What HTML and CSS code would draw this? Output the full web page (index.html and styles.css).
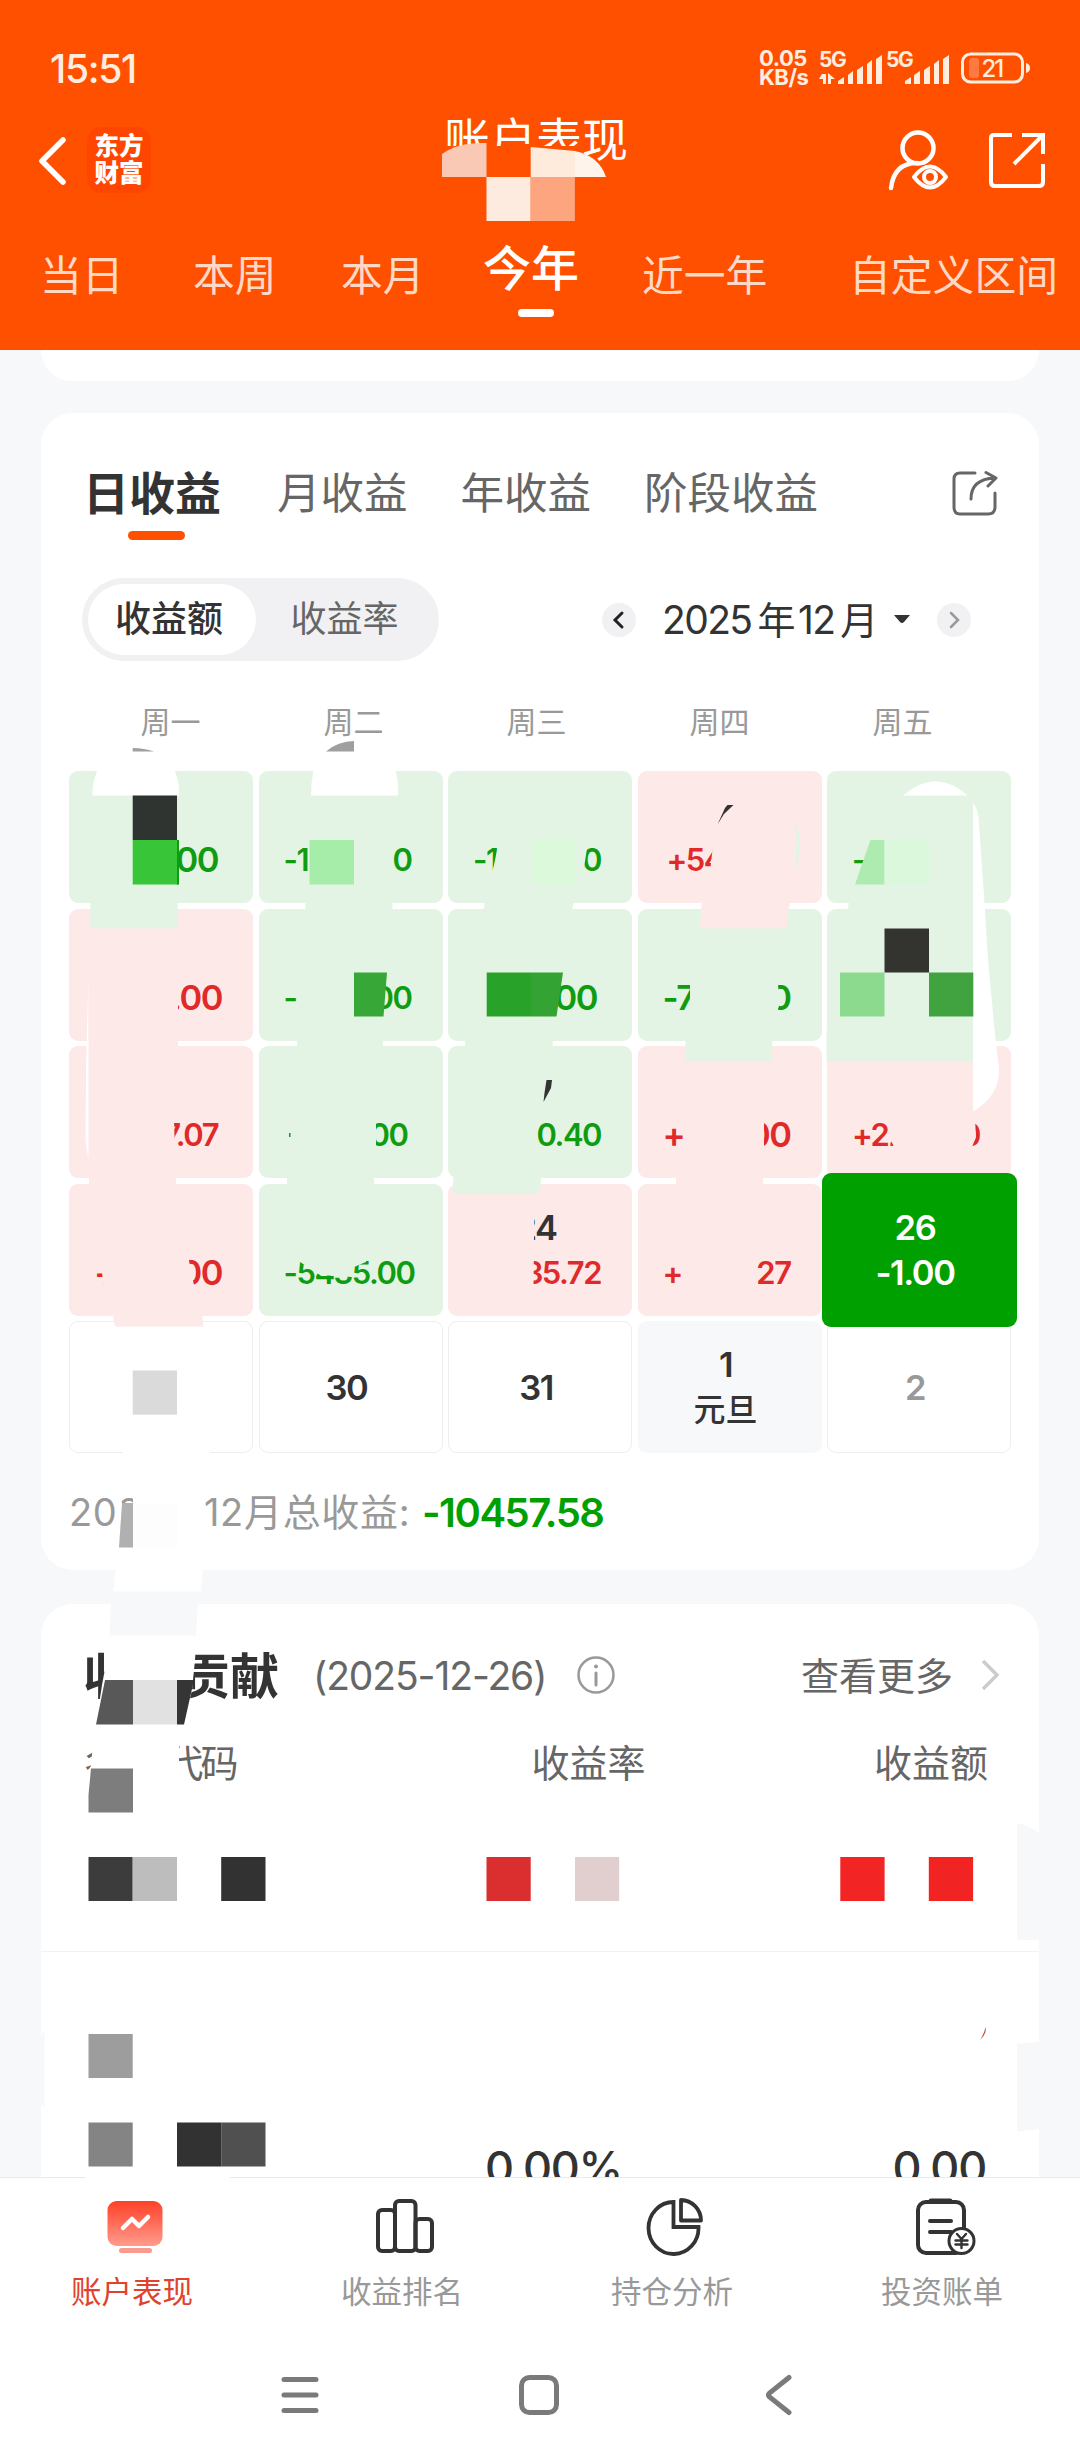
FILE: index.html
```html
<!DOCTYPE html>
<html lang="zh-CN">
<head>
  <meta charset="UTF-8">
  <meta name="viewport" content="width=device-width, initial-scale=1.0">
  <title>账户表现</title>
  <link rel="stylesheet" href="styles.css">
</head>
<body>
<div class="page">
  <header class="header">
    <div class="status">
      <span class="time">15:51</span>
      <div class="speed"><span>0.05</span><span>KB/s</span></div>
      <svg class="signals" width="132" height="40" viewBox="0 0 132 40">
        <g fill="#ffede0">
          <text class="net" x="0" y="19">5G</text>
          <text class="net" x="67" y="19">5G</text>
          <path d="M3 26h4v10h-3v-5h-4zM9 25l7 6h-4v5h-3z"/>
          <path d="M19 36v-3l6-4v7zM29 36v-9l5-4v13zM38 36V22l6-4v18zM48 36V16l5-4v24zM57 36V11l6-4v29z"/>
          <path d="M86 36v-3l6-4v7zM95 36v-9l6-4v13zM105 36V22l6-4v18zM115 36V16l5-4v24zM124 36V11l6-4v29z"/>
        </g>
      </svg>
      <svg class="battery" width="72" height="32" viewBox="0 0 72 32">
        <rect x="2.500" y="2" width="60" height="28" rx="8" fill="none" stroke="#ffede0" stroke-width="3"/>
        <rect x="9" y="6" width="10" height="20" rx="3" fill="#ff7a42"/>
        <path d="M66 11q4 1 4 5t-4 5z" fill="#ffede0"/>
        <text class="level" x="21.500" y="24.500">21</text>
      </svg>
    </div>

    <div class="titlebar">
      <svg class="back" width="30" height="50" viewBox="0 0 30 50"><path d="M26 4L5 25l21 21" fill="none" stroke="#fff" stroke-width="5.500" stroke-linecap="round" stroke-linejoin="round"/></svg>
      <div class="logo">东方<br>财富</div>
      <h1>账户表现</h1>
      <svg class="user" width="62" height="64" viewBox="0 0 62 64" fill="none" stroke="#fff" stroke-width="4.500" stroke-linecap="round">
        <circle cx="30" cy="21" r="15.500"/>
        <path d="M3 61Q6 36 29 36"/>
        <path d="M26 50q16-21 32 0q-16 21-32 0z" stroke-width="4" stroke-linejoin="round"/>
        <circle cx="42" cy="50" r="6" stroke-width="4"/>
      </svg>
      <svg class="open" width="58" height="58" viewBox="0 0 58 58" fill="none" stroke="#fff" stroke-width="4">
        <path d="M24 3H6Q3 3 3 6V50Q3 54 7 54H51Q55 54 55 50V32" stroke-linejoin="round"/>
        <path d="M34 3H55V22M54 4L26 32"/>
      </svg>
    </div>

    <nav class="periods">
      <span>当日</span>
      <span>本周</span>
      <span>本月</span>
      <span class="on">今年</span>
      <span>近一年</span>
      <span>自定义区间</span>
    </nav>
  </header>

  <main class="content">
    <section class="card card-top"></section>

    <section class="card card-calendar">
      <div class="tabs">
        <span class="on">日收益</span>
        <span>月收益</span>
        <span>年收益</span>
        <span>阶段收益</span>
        <svg class="share" width="46" height="48" viewBox="0 0 46 48" fill="none" stroke="#666" stroke-width="3" stroke-linecap="round" stroke-linejoin="round">
          <path d="M23 4H8Q2 4 2 10V38Q2 45 8 45H36Q43 45 43 38V24"/>
          <path d="M19 30Q19 10 43 9M34 3.500L44 9L36 17"/>
        </svg>
      </div>

      <div class="controls">
        <div class="toggle">
          <span class="on">收益额</span>
          <span>收益率</span>
        </div>
        <div class="month">
          <i class="step"><svg width="34" height="34"><path d="M20 10l-7 7 7 7" fill="none" stroke="#222" stroke-width="3" stroke-linecap="round"/></svg></i>
          <span class="label">2025<b>年</b>12<b>月</b></span>
          <svg class="caret" width="18" height="9"><path d="M1 0H17L11 7Q9 9 7 7Z" fill="#333"/></svg>
          <i class="step"><svg width="34" height="34"><path d="M14 10l7 7-7 7" fill="none" stroke="#999" stroke-width="2.500" stroke-linecap="round"/></svg></i>
        </div>
      </div>

      <div class="week">
        <span>周一</span><span>周二</span><span>周三</span><span>周四</span><span>周五</span>
      </div>

      <div class="days">
        <div class="day down"><p></p><p class="amt big tail"><span></span><span>00</span></p></div>
        <div class="day down"><p></p><p class="amt"><span>-1</span><span>0</span></p></div>
        <div class="day down"><p></p><p class="amt"><span>-1</span><span>0</span></p></div>
        <div class="day up"><p></p><p class="amt inset"><span>+54</span></p></div>
        <div class="day down"><p></p><p class="amt"><span>-</span></p></div>

        <div class="day up"><p></p><p class="amt big"><span></span><span>.00</span></p></div>
        <div class="day down"><p></p><p class="amt"><span>-</span><span>00</span></p></div>
        <div class="day down"><p></p><p class="amt big tail"><span></span><span>00</span></p></div>
        <div class="day down"><p></p><p class="amt big"><span>-7</span><span>0</span></p></div>
        <div class="day down"></div>

        <div class="day up"><p></p><p class="amt tail"><span></span><span>7.07</span></p></div>
        <div class="day down"><p></p><p class="amt tail"><span></span><span>00</span></p></div>
        <div class="day down"><p></p><p class="amt"><span></span><span>0.40</span></p></div>
        <div class="day up"><p></p><p class="amt big"><span>+</span><span>00</span></p></div>
        <div class="day up"><p></p><p class="amt"><span>+22</span><span>0</span></p></div>

        <div class="day up"><p></p><p class="amt big"><span>+</span><span>00</span></p></div>
        <div class="day down"><p></p><p class="amt"><span>-5435.00</span></p></div>
        <div class="day up"><p>24</p><p class="amt"><span></span><span>35.72</span></p></div>
        <div class="day up"><p></p><p class="amt"><span>+</span><span>27</span></p></div>
        <div class="day today"><p>26</p><p>-1.00</p></div>

        <div class="day blank"></div>
        <div class="day blank"><p>30</p></div>
        <div class="day blank"><p>31</p></div>
        <div class="day holiday"><p>1</p><p class="name">元旦</p></div>
        <div class="day blank next"><p>2</p></div>
      </div>

      <div class="total"><span class="total-label">2025年12月总收益:</span><span class="total-value">-10457.58</span></div>
    </section>

    <section class="card card-contrib">
      <div class="contrib-head">
        <h2>收益贡献</h2>
        <span class="date">(2025-12-26)</span>
        <svg class="info" width="40" height="40" viewBox="0 0 40 40"><circle cx="20" cy="20" r="17.500" fill="none" stroke="#999" stroke-width="2.500"/><circle cx="20" cy="11.500" r="2" fill="#999"/><path d="M20 18v12" stroke="#999" stroke-width="3" stroke-linecap="round"/></svg>
        <span class="more">查看更多</span>
        <svg class="go" width="20" height="34"><path d="M3 3l14 14L3 31" fill="none" stroke="#ccc" stroke-width="3.500"/></svg>
      </div>
      <div class="cols"><span>名称/代码</span><span>收益率</span><span>收益额</span></div>
      <div class="stock"></div>
      <div class="stock last"><span class="rate">0.00%</span><span class="gain">0.00</span></div>
    </section>
  </main>

  <footer class="footer">
    <nav class="menu">
      <a class="on">
        <svg width="60" height="60" viewBox="0 0 60 60">
          <defs><linearGradient id="g" x1="0" y1="0" x2="0" y2="1"><stop offset="0" stop-color="#ff4027"/><stop offset="1" stop-color="#ff9b8d"/></linearGradient></defs>
          <rect x="2.500" y="5" width="55" height="45" rx="9" fill="url(#g)"/>
          <rect x="14" y="52" width="33" height="5" rx="2.500" fill="#fb9a8e"/>
          <path d="M18 32l9-9 7 7 9-9" fill="none" stroke="#fff" stroke-width="4.500" stroke-linecap="round" stroke-linejoin="round"/>
        </svg>
        <span>账户表现</span>
      </a>
      <a>
        <svg width="60" height="60" viewBox="0 0 60 60" fill="none" stroke="#333" stroke-width="4">
          <rect x="3" y="14" width="17" height="41" rx="4"/>
          <rect x="20" y="5" width="20.500" height="50" rx="4"/>
          <rect x="40.500" y="23" width="16.500" height="32" rx="4"/>
        </svg>
        <span>收益排名</span>
      </a>
      <a>
        <svg width="60" height="60" viewBox="0 0 60 60" fill="none" stroke="#333" stroke-width="3.800">
          <path d="M28.500 6A25 26 0 1 0 53.500 31H28.500Z"/>
          <path d="M36 4V24.500H56A20.500 20.500 0 0 0 36 4Z" stroke-linejoin="round"/>
        </svg>
        <span>持仓分析</span>
      </a>
      <a>
        <svg width="64" height="60" viewBox="0 0 64 60" fill="none" stroke="#333" stroke-width="4" stroke-linecap="round">
          <rect x="5" y="6" width="46" height="51" rx="8"/>
          <path d="M18 5H37" stroke-width="5"/>
          <path d="M17 25H38M17 36H38"/>
          <circle cx="48.500" cy="45" r="12.500" fill="#fff" stroke-width="3"/>
          <path d="M44 38l4.500 5 4.500-5M48.500 43V52M42.500 44.500h12M42.500 48.500h12" stroke-width="2.400"/>
        </svg>
        <span>投资账单</span>
      </a>
    </nav>
    <div class="system">
      <svg width="40" height="44" viewBox="0 0 40 44"><path d="M4 6.500H36M4 22H36M4 37.500H36" stroke="#7a7a7a" stroke-width="5" stroke-linecap="round"/></svg>
      <svg width="42" height="44" viewBox="0 0 42 44"><rect x="3.500" y="4.500" width="35" height="35" rx="8" fill="none" stroke="#7a7a7a" stroke-width="5"/></svg>
      <svg class="sys-back" width="30" height="44" viewBox="0 0 30 44"><path d="M25 4.500L5.500 20Q3.500 22 5.500 24L25 39.500" fill="none" stroke="#7a7a7a" stroke-width="5" stroke-linecap="round"/></svg>
    </div>
  </footer>

  <!-- privacy mosaic painted over the page -->
  <svg class="mosaic" width="1080" height="2460" viewBox="0 0 1080 2460">
    <!-- title -->
    <rect x="442" y="146" width="133" height="31" fill="#ff5000"/>
    <path d="M442 154Q458 142 486.500 143V177H442Z" fill="#f9c9b5"/>
    <path d="M530.700 147L575 151V177H530.700Z" fill="#feebdc"/>
    <path d="M575 151Q599 156 606 177H575Z" fill="#fff4eb"/>
    <rect x="486.500" y="177" width="44.200" height="44" fill="#fdebdf"/>
    <rect x="530.700" y="177" width="44.200" height="44" fill="#fda57e"/>

    <!-- monday -->
    <path d="M132.700 751.500V748Q144 748 154 751.500Z" fill="#9f9f9f"/>
    <path d="M92.500 795.500Q92 783 97.500 770H174.500Q180 783 179 795.500Z" fill="#fff"/>
    <rect x="132.700" y="795.500" width="44.300" height="44.500" fill="#303430"/>
    <rect x="132.700" y="840" width="46" height="44.500" fill="#38c538"/>
    <rect x="177" y="840" width="2" height="44.500" fill="#109c10"/>
    <path d="M90.500 902L90 928.500H178.500L177.500 902Z" fill="#e4f4e4"/>
    <path d="M88.500 972L86 1070L85.500 1140L88.500 1160Z" fill="#fff"/>
    <path d="M88.500 928.500H178V1120H174L176 1185H89Z" fill="#fce9e8"/>
    <path d="M113 1315L115 1326.500H203.500L202 1315Z" fill="#fce9e8"/>
    <path d="M100 1255L104 1290H195L190 1266L188 1255Z" fill="#fce9e8"/>
    <rect x="132.700" y="1370.500" width="44.300" height="44.200" fill="#dadada"/>
    <rect x="123" y="1450" width="87" height="5" fill="#fff"/>

    <!-- tuesday -->
    <path d="M326 751.500Q338 741 354 741V751.500Z" fill="#9f9f9f"/>
    <path d="M311 795.500Q311 783 313.500 770H395.500Q399 783 398 795.500Z" fill="#fff"/>
    <rect x="309.500" y="840" width="44.500" height="44.500" fill="#a7edaa"/>
    <path d="M305.500 902V910H392.500V902Z" fill="#e4f4e4"/>
    <path d="M354 972.500H387L383.500 1016.500H354Z" fill="#37a737"/>
    <rect x="297" y="1040" width="86" height="7" fill="#e4f4e4"/>
    <rect x="289" y="1133" width="1.500" height="4" fill="#109c10"/>
    <rect x="292" y="1115" width="84" height="40" fill="#e4f4e4"/>
    <rect x="287" y="1177" width="87" height="8" fill="#e4f4e4"/>
    <path d="M297 1260L320 1275L352 1277L354 1267L366 1262V1255H297Z" fill="#e4f4e4"/>

    <!-- wednesday -->
    <path d="M498 845L494 865L492 872H531V845Z" fill="#e4f4e4"/>
    <rect x="531" y="840" width="44" height="44.500" fill="#dcf9dc"/>
    <path d="M575 842H588L583 874H575Z" fill="#e4f4e4"/>
    <path d="M485 902L483.500 910H572L574 902Z" fill="#e4f4e4"/>
    <rect x="486.700" y="972.500" width="44.300" height="44" fill="#29a229"/>
    <path d="M531 972.500H563L556.500 1016.500H531Z" fill="#33a333"/>
    <path d="M465 1040V1047H552.500L553 1040Z" fill="#e4f4e4"/>
    <path d="M546.500 1080H552L551 1088L543.500 1102L544.500 1093Z" fill="#333"/>
    <path d="M453.500 1177L452.500 1194H540L541 1177Z" fill="#e4f4e4"/>
    <path d="M500 1205H534V1245H534L533.500 1288H500Z" fill="#fce9e8"/>

    <!-- thursday -->
    <path d="M717.500 824.500L725 808L727.500 805H733.500L724 814Z" fill="#333"/>
    <path d="M713 845L710 872H735V845Z" fill="#fce9e8"/>
    <path d="M796 824Q804 842 796 869Z" fill="#e4f4e4"/>
    <path d="M702 902L699.500 928.500H786.500L790 902Z" fill="#fce9e8"/>
    <path d="M690 980V1015H776L779 1006V992L777 980Z" fill="#e4f4e4"/>
    <path d="M685.500 1040L684.500 1061.500H771.500L772.500 1040Z" fill="#e4f4e4"/>
    <rect x="700" y="1118" width="64" height="36" fill="#fce9e8"/>
    <rect x="676" y="1177" width="87" height="8" fill="#fce9e8"/>

    <!-- friday -->
    <path d="M903 795.500Q936 767 967.500 795.500Z" fill="#fff"/>
    <path d="M973 803Q979 810 979 825L984.500 903L988 960L996 1045L999 1068Q1000 1096 973 1111.500Z" fill="#fff"/>
    <path d="M870.500 840H884.500V884.500H855L862 864Z" fill="#aeebb1"/>
    <rect x="884.500" y="840" width="44.500" height="44.500" fill="#dcf8dc"/>
    <path d="M849 902L847.500 910H973V902Z" fill="#e4f4e4"/>
    <rect x="884.500" y="928.500" width="44.500" height="44" fill="#333330"/>
    <rect x="840" y="972.500" width="44.500" height="44" fill="#8cda8e"/>
    <rect x="929" y="972.500" width="44.300" height="44" fill="#41a340"/>
    <path d="M826.500 1030V1061.500H973V1030Z" fill="#e4f4e4"/>
    <path d="M888 1120V1134L894 1147H972L976 1137L975 1120Z" fill="#fce9e8"/>

    <!-- total -->
    <path d="M118 1495L122 1503H205V1535H119L120 1503Z" fill="#fff"/>
    <rect x="133" y="1490" width="72" height="40" fill="#fff"/>
    <path d="M122 1503H133V1547.500H119Z" fill="#b0b0b0"/>
    <rect x="133" y="1503" width="44" height="44.500" fill="#fdfdfd"/>
    <path d="M116 1569L113 1591.500H201L203 1569Z" fill="#fff"/>
    <path d="M111 1603L109.500 1635.500H196L198 1603Z" fill="#f7f8fa"/>

    <!-- contribution -->
    <path d="M109.500 1645H196L195 1660L192 1690L184 1724H96L102 1685Z" fill="#fff"/>
    <path d="M105 1680H133V1724.500H96Z" fill="#585858"/>
    <rect x="133" y="1680" width="44" height="44.500" fill="#e1e1e1"/>
    <path d="M177 1680H194L184 1724.500H177Z" fill="#353535"/>
    <path d="M93 1742H179V1785H88V1770L91 1766Z" fill="#fff"/>
    <path d="M91 1768.500H133V1812.500H88.500V1795Z" fill="#7d7d7d"/>
    <rect x="88.500" y="1857" width="44.200" height="44" fill="#3c3c3c"/>
    <rect x="132.700" y="1857" width="44.300" height="44" fill="#bdbdbd"/>
    <rect x="221.200" y="1857" width="44.300" height="44" fill="#323232"/>
    <rect x="486.500" y="1857" width="44.200" height="44" fill="#db2e2e"/>
    <rect x="575" y="1857" width="44.200" height="44" fill="#e1cfcf"/>
    <rect x="840.300" y="1857" width="44.300" height="44" fill="#f22424"/>
    <rect x="928.800" y="1857" width="44.300" height="44" fill="#f22323"/>
    <path d="M1017 1823Q1030 1826 1040 1834V1940H1017Z" fill="#f7f8fa"/>
    <path d="M1017 2044L1040 2041.500V2129L1017 2131.500Z" fill="#f7f8fa"/>
    <path d="M40 2035L44.500 2031V2107L40 2104Z" fill="#f7f8fa"/>
    <path d="M980 2040Q984 2034 985.500 2027Q987 2034 980 2040Z" fill="#c9504a"/>
    <rect x="88.500" y="2034" width="44.200" height="44" fill="#9d9d9d"/>
    <rect x="88.500" y="2122.500" width="44.200" height="44" fill="#848484"/>
    <rect x="177" y="2122.500" width="44.200" height="44" fill="#323232"/>
    <rect x="221.200" y="2122.500" width="44.300" height="44" fill="#505050"/>
    <rect x="85" y="2170" width="145" height="10" fill="#fff"/>
  </svg>
</div>
</body>
</html>
```
FILE: styles.css
```css
* {
  box-sizing: border-box;
}
body {
  margin: 0;
  background: #f7f8fa;
  font-family: Inter, 'Noto Sans CJK SC', sans-serif;
  color: #333;
}
h1, h2, p {
  margin: 0;
}
svg {
  display: block;
  flex: none;
}
.page {
  position: relative;
  width: 1080px;
  height: 2460px;
  overflow: hidden;
  display: flex;
  flex-direction: column;
  white-space: nowrap;
}

/* header */
.header {
  height: 350px;
  flex: none;
  background: #ff5000;
  color: #fff;
}
.status {
  display: flex;
  align-items: center;
  height: 110px;
  padding: 26px 48px 0 50px;
  color: #ffede0;
}
.time {
  font-size: 39px;
  font-weight: 500;
  letter-spacing: -1.3px;
  flex: 1;
}
.speed {
  display: flex;
  flex-direction: column;
  font-size: 22px;
  line-height: 19px;
  font-weight: 700;
  letter-spacing: -0.5px;
  width: 60px;
}
.net {
  font-size: 21px;
  font-weight: 700;
  letter-spacing: -1.5px;
}
.signals {
  margin-right: 9px;
  overflow: visible;
}
.level {
  font-size: 24px;
  font-weight: 500;
  letter-spacing: -2px;
  fill: #ffede0;
}
.titlebar {
  display: flex;
  height: 110px;
  padding: 0 30px 0 37px;
}
.back {
  margin-top: 26px;
}
.logo {
  margin: 17px 0 0 20px;
  width: 64px;
  height: 66px;
  padding-top: 6px;
  border-radius: 14px;
  background: #ff4600;
  text-align: center;
  font-size: 24.5px;
  line-height: 27px;
  font-weight: 900;
}
.titlebar h1 {
  flex: 1;
  padding-left: 293px;
  font-size: 46px;
  font-weight: 400;
  line-height: 58px;
  color: #fff;
}
.user {
  margin: 17px 38px 0 0;
}
.open {
  margin: 22px 4px 0 0;
}
.periods {
  display: grid;
  grid-template-columns: 153px 148px 142px 159px 207px 212px;
  padding-left: 40px;
  font-size: 41.8px;
  line-height: 60px;
  padding-top: 26px;
  color: #ffd9c5;
}
.periods .on {
  margin-top: -7px;
  color: #fff;
  font-size: 48px;
  font-weight: 500;
}
.periods .on::after {
  content: '';
  display: block;
  width: 36px;
  height: 8px;
  margin: 10px 0 0 35px;
  border-radius: 4px;
  background: #fff;
}

/* cards */
.content {
  height: 1827px;
  flex: none;
  overflow: hidden;
  padding: 0 41px;
}
.card {
  background: #fff;
  border-radius: 32px;
}
.card-top {
  height: 31px;
  border-radius: 0 0 32px 32px;
  margin-bottom: 32px;
}
.card-calendar {
  height: 1157px;
  padding: 50px 28px 0;
}
.tabs {
  display: flex;
  height: 78px;
  padding-left: 14px;
  font-size: 43.5px;
  line-height: 60px;
  color: #666;
}
.tabs span {
  margin-right: 53px;
}
.tabs .on {
  font-size: 46px;
  font-weight: 700;
  color: #333;
  margin-right: 56px;
}
.tabs .on::after {
  content: '';
  display: block;
  width: 57px;
  height: 9px;
  margin: 8px 0 0 45px;
  border-radius: 5px;
  background: #ff5000;
}
.share {
  margin: 6px 13px 0 auto;
}
.controls {
  display: flex;
  justify-content: space-between;
  margin-top: 37px;
  padding: 0 40px 0 13px;
}
.toggle {
  display: flex;
  width: 357px;
  height: 83px;
  padding: 6px;
  border-radius: 42px;
  background: #f1f1f4;
  font-size: 36px;
  line-height: 71px;
  color: #666;
}
.toggle span {
  flex: 1;
  text-align: center;
}
.toggle .on {
  flex: none;
  width: 168px;
  border-radius: 36px;
  padding-right: 6px;
  background: #fff;
  color: #333;
  font-weight: 500;
}
.month {
  display: flex;
  align-items: center;
}
.step {
  width: 34px;
  height: 34px;
  border-radius: 50%;
  background: #f1f1f4;
}
.month .label {
  margin: -4px 22px 0 26px;
  width: 209px;
  font-size: 39px;
  letter-spacing: -1.6px;
}
.month b {
  font-size: 38px;
  font-weight: 400;
  margin: 0 4px 0 6px;
}
.caret {
  margin-right: 26px;
}
.week {
  display: grid;
  grid-template-columns: repeat(5, 183px);
  margin: 39px 0 0 10px;
  font-size: 30px;
  line-height: 44px;
  text-align: center;
  color: #999;
}
.days {
  display: grid;
  grid-template-columns: repeat(5, 184px);
  grid-auto-rows: 132px;
  gap: 5.5px;
  margin-top: 27px;
}
.day {
  display: flex;
  flex-direction: column;
  justify-content: center;
  border-radius: 9px;
  padding-right: 8px;
  font-size: 34.5px;
  font-weight: 600;
  line-height: 45px;
  letter-spacing: -1.4px;
  text-align: center;
}
.day p {
  height: 45px;
}
.day .amt {
  display: flex;
  justify-content: space-between;
  padding: 0 23px 0 25px;
  font-size: 31px;
  letter-spacing: -1.5px;
}
.day .amt.big {
  font-size: 34.5px;
}
.day .amt.inset {
  padding-left: 29px;
}
.day .amt.tail {
  padding-right: 27px;
}
.up {
  background: #fce9e8;
}
.up .amt {
  color: #e02a2a;
}
.down {
  background: #e4f4e4;
}
.down .amt {
  color: #109c10;
}
.today {
  margin: -11px -5.5px;
  background: #00a000;
  color: #fff;
  z-index: 1;
}
.blank {
  border: 1px solid #eee;
}
.holiday {
  background: #f7f8fa;
}
.day .name {
  font-size: 32px;
  font-weight: 500;
  letter-spacing: 0;
}
.next {
  color: #999;
}
.total {
  display: flex;
  align-items: center;
  margin-top: 30px;
  height: 58px;
  font-size: 38px;
}
.total-label {
  width: 353px;
  margin-top: -5px;
  letter-spacing: 0.7px;
  color: #999;
}
.total-value {
  font-size: 40px;
  font-weight: 600;
  letter-spacing: -1.5px;
  color: #00a000;
}

.card-contrib {
  height: 700px;
  margin-top: 34px;
  padding: 38px 0 0;
}
.contrib-head {
  display: flex;
  align-items: center;
  height: 66px;
  padding: 0 39px 0 42px;
  color: #666;
}
.contrib-head h2 {
  width: 230px;
  margin-top: -5px;
  font-size: 49px;
  font-weight: 700;
  color: #333;
}
.date {
  width: 240px;
  font-size: 39px;
  letter-spacing: -1.1px;
}
.info {
  margin-left: 23px;
  margin-right: auto;
}
.more {
  font-size: 38px;
  margin-top: -4px;
  margin-right: 27px;
}
.cols {
  display: flex;
  justify-content: space-between;
  height: 50px;
  margin-top: 30px;
  padding: 0 51px 0 43px;
  font-size: 38px;
  line-height: 50px;
  color: #666;
}
.cols span:first-child {
  letter-spacing: -2.8px;
}
.cols span:nth-child(2) {
  margin-left: 105px;
}
.cols span {
  width: 114px;
}
.stock {
  height: 164px;
  border-bottom: 1px solid #f2f2f2;
}
.stock.last {
  display: flex;
  justify-content: space-between;
  padding: 186px 53px 0 444px;
  border: 0;
  font-size: 45px;
  line-height: 60px;
  letter-spacing: -1.2px;
  font-weight: 500;
}

/* bottom bars */
.footer {
  flex: 1;
  background: #fff;
  border-top: 1px solid #eaeaea;
}
.menu {
  display: grid;
  grid-template-columns: repeat(4, 270px);
  height: 167px;
}
.menu a {
  display: flex;
  flex-direction: column;
  align-items: center;
  padding-top: 18px;
  color: #999;
  font-size: 30.5px;
  line-height: 44px;
}
.menu a span {
  margin: 14px 6px 0 0;
}
.menu .on {
  color: #e0432d;
}
.system {
  display: flex;
  align-items: center;
  height: 100px;
  padding-left: 280px;
  gap: 198px;
}
.sys-back {
  margin-left: 6px;
}

.mosaic {
  position: absolute;
  left: 0;
  top: 0;
  z-index: 5;
}
```
